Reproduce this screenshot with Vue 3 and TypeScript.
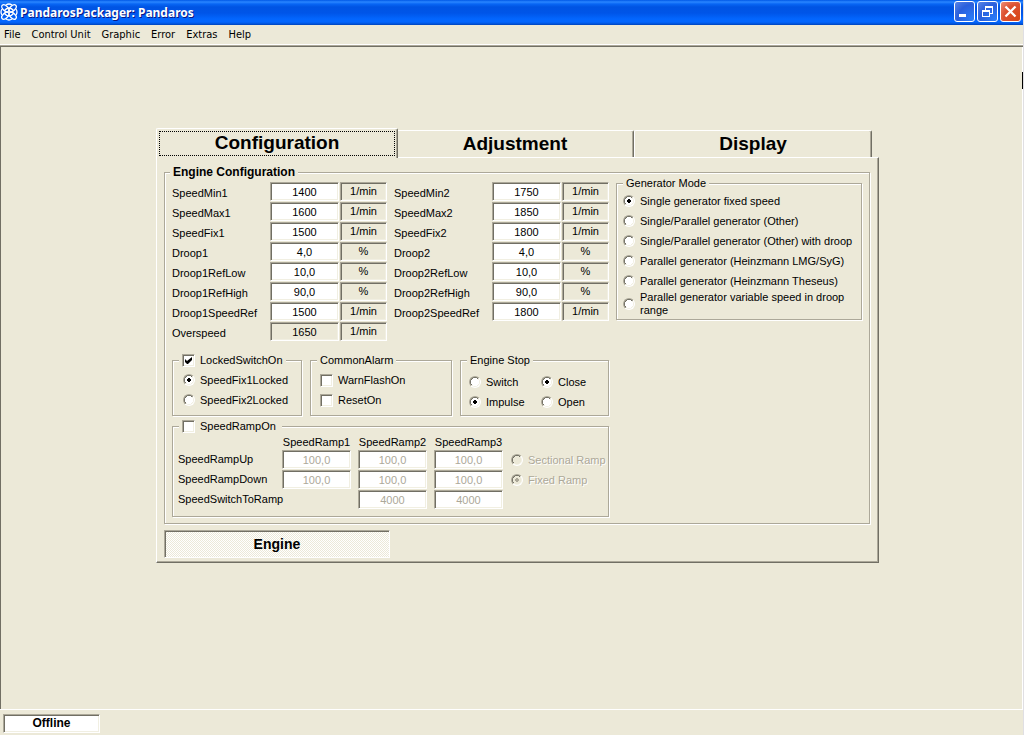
<script setup lang="ts">
import { reactive, ref } from 'vue'

interface Param {
  id: string
  value: string
  unit: string
  readonly?: boolean
}

const menus: string[] = ['File', 'Control Unit', 'Graphic', 'Error', 'Extras', 'Help']
const tabs: string[] = ['Configuration', 'Adjustment', 'Display']
const activeTab = ref('Configuration')

const sets = reactive<Param[][]>([
  [
    { id: 'SpeedMin1', value: '1400', unit: '1/min' },
    { id: 'SpeedMax1', value: '1600', unit: '1/min' },
    { id: 'SpeedFix1', value: '1500', unit: '1/min' },
    { id: 'Droop1', value: '4,0', unit: '%' },
    { id: 'Droop1RefLow', value: '10,0', unit: '%' },
    { id: 'Droop1RefHigh', value: '90,0', unit: '%' },
    { id: 'Droop1SpeedRef', value: '1500', unit: '1/min' },
    { id: 'Overspeed', value: '1650', unit: '1/min', readonly: true },
  ],
  [
    { id: 'SpeedMin2', value: '1750', unit: '1/min' },
    { id: 'SpeedMax2', value: '1850', unit: '1/min' },
    { id: 'SpeedFix2', value: '1800', unit: '1/min' },
    { id: 'Droop2', value: '4,0', unit: '%' },
    { id: 'Droop2RefLow', value: '10,0', unit: '%' },
    { id: 'Droop2RefHigh', value: '90,0', unit: '%' },
    { id: 'Droop2SpeedRef', value: '1800', unit: '1/min' },
  ],
])

const generatorModes: string[] = [
  'Single generator fixed speed',
  'Single/Parallel generator (Other)',
  'Single/Parallel generator (Other) with droop',
  'Parallel generator (Heinzmann LMG/SyG)',
  'Parallel generator (Heinzmann Theseus)',
  'Parallel generator variable speed in droop range',
]
const generatorMode = ref(generatorModes[0])

const lockedOn = ref(true)
const lockedSpeed = ref('SpeedFix1Locked')
const warnFlash = ref(false)
const resetOn = ref(false)
const stopKind = ref('Impulse')
const stopContact = ref('Close')

const rampOn = ref(false)
const rampKind = ref('Fixed Ramp')
const rampRows = reactive([
  { id: 'SpeedRampUp', values: ['100,0', '100,0', '100,0'] },
  { id: 'SpeedRampDown', values: ['100,0', '100,0', '100,0'] },
  { id: 'SpeedSwitchToRamp', values: ['', '4000', '4000'] },
])
</script>

<template>
  <div class="window">
    <header class="titlebar">
      <svg class="logo" viewBox="0 0 18 18" aria-hidden="true">
        <g fill="none" stroke="#fff" stroke-width="1.3">
          <ellipse cx="5.300" cy="5.300" rx="4.300" ry="2.500" transform="rotate(45 5.300 5.300)" />
          <ellipse cx="12.700" cy="5.300" rx="4.300" ry="2.500" transform="rotate(-45 12.700 5.300)" />
          <ellipse cx="5.300" cy="12.700" rx="4.300" ry="2.500" transform="rotate(-45 5.300 12.700)" />
          <ellipse cx="12.700" cy="12.700" rx="4.300" ry="2.500" transform="rotate(45 12.700 12.700)" />
          <path d="M6 2Q9 0 12 2M6 16Q9 18 12 16M2 6Q0 9 2 12M16 6Q18 9 16 12M4 8Q9 2 14 8M4 10Q9 16 14 10" />
        </g>
      </svg>
      <h1>PandarosPackager: Pandaros</h1>
      <div class="caption-buttons">
        <button type="button" aria-label="Minimize">
          <svg viewBox="0 0 19 19"><path d="M4 12h7v3H4z" fill="#fff" /></svg>
        </button>
        <button type="button" aria-label="Restore">
          <svg viewBox="0 0 19 19">
            <path d="M7 4h8v2H7zM14 6h1v6h-1zM7 6h1v2H7zM12 11h2v1h-2zM4 8h8v2H4zM4 10h1v5H4zM11 10h1v5h-1zM4 14h8v1H4z" fill="#fff" />
          </svg>
        </button>
        <button type="button" class="close" aria-label="Close">
          <svg viewBox="0 0 19 19"><path d="M4.500 4.500L14.500 14.500M14.500 4.500L4.500 14.500" stroke="#fff" stroke-width="2.300" /></svg>
        </button>
      </div>
    </header>

    <nav class="menubar">
      <button v-for="m in menus" :key="m" type="button">{{ m }}</button>
    </nav>

    <main class="client">
      <div class="tabs" role="tablist">
        <button
          v-for="t in tabs"
          :key="t"
          type="button"
          role="tab"
          class="tab"
          :class="{ active: t === activeTab }"
          :aria-selected="t === activeTab"
          @click="activeTab = t"
        >
          <span>{{ t }}</span>
        </button>
      </div>

      <section class="panel">
        <fieldset class="group engine-config">
          <legend>Engine Configuration</legend>
          <div class="layout">
            <div class="left">
              <div class="params">
                <div v-for="(set, i) in sets" :key="i" class="param-set">
                  <div v-for="p in set" :key="p.id" class="param">
                    <label :for="p.id">{{ p.id }}</label>
                    <input :id="p.id" v-model="p.value" type="text" class="field" :readonly="p.readonly" />
                    <span class="unit">{{ p.unit }}</span>
                  </div>
                </div>
              </div>

              <div class="boxes">
                <fieldset class="group">
                  <legend>
                    <label class="choice"><input v-model="lockedOn" type="checkbox" />LockedSwitchOn</label>
                  </legend>
                  <div class="choices locked">
                    <label v-for="s in ['SpeedFix1Locked', 'SpeedFix2Locked']" :key="s" class="choice">
                      <input v-model="lockedSpeed" type="radio" name="locked" :value="s" />{{ s }}
                    </label>
                  </div>
                </fieldset>
                <fieldset class="group">
                  <legend>CommonAlarm</legend>
                  <div class="choices alarm">
                    <label class="choice"><input v-model="warnFlash" type="checkbox" />WarnFlashOn</label>
                    <label class="choice"><input v-model="resetOn" type="checkbox" />ResetOn</label>
                  </div>
                </fieldset>
                <fieldset class="group">
                  <legend>Engine Stop</legend>
                  <div class="choices stop">
                    <label class="choice"><input v-model="stopKind" type="radio" name="kind" value="Switch" />Switch</label>
                    <label class="choice"><input v-model="stopContact" type="radio" name="contact" value="Close" />Close</label>
                    <label class="choice"><input v-model="stopKind" type="radio" name="kind" value="Impulse" />Impulse</label>
                    <label class="choice"><input v-model="stopContact" type="radio" name="contact" value="Open" />Open</label>
                  </div>
                </fieldset>
              </div>

              <fieldset class="group">
                <legend class="ramp-legend">
                  <label class="choice"><input v-model="rampOn" type="checkbox" />SpeedRampOn</label>
                </legend>
                <div class="ramp">
                  <div class="ramp-grid">
                    <span></span>
                    <span v-for="n in 3" :key="n" class="ramp-head">SpeedRamp{{ n }}</span>
                    <template v-for="row in rampRows" :key="row.id">
                      <span class="ramp-label">{{ row.id }}</span>
                      <template v-for="(v, c) in row.values" :key="c">
                        <input
                          v-if="v"
                          v-model="row.values[c]"
                          type="text"
                          class="field"
                          :aria-label="row.id + ' SpeedRamp' + (c + 1)"
                          :disabled="!rampOn"
                        />
                        <span v-else></span>
                      </template>
                    </template>
                  </div>
                  <div class="ramp-kind">
                    <label v-for="k in ['Sectional Ramp', 'Fixed Ramp']" :key="k" class="choice" :class="{ off: !rampOn }">
                      <input v-model="rampKind" type="radio" name="ramp" :value="k" :disabled="!rampOn" />{{ k }}
                    </label>
                  </div>
                </div>
              </fieldset>
            </div>

            <fieldset class="group generator">
              <legend>Generator Mode</legend>
              <div class="choices modes">
                <label v-for="g in generatorModes" :key="g" class="choice">
                  <input v-model="generatorMode" type="radio" name="generator" :value="g" /><span>{{ g }}</span>
                </label>
              </div>
            </fieldset>
          </div>
        </fieldset>
        <button type="button" class="engine" aria-pressed="true">Engine</button>
      </section>
    </main>

    <footer class="status"><output>Offline</output></footer>
    <i class="edge-mark" aria-hidden="true"></i>
  </div>
</template>

<style>
body {
  margin: 0;
  background: #ece9d8;
}
</style>

<style scoped>
.window {
  --face: #ece9d8;
  --shade: #aca899;
  --dark: #716f64;
  --light: #f1efe2;
  position: relative;
  box-sizing: border-box;
  display: flex;
  flex-direction: column;
  min-height: 100vh;
  border-right: 1px solid #e0dfe3;
  background: var(--face);
  color: #000;
  font: 11px/13px "Liberation Sans", Arial, sans-serif;
}
.window * {
  box-sizing: border-box;
}
button,
input {
  margin: 0;
  font: inherit;
  color: inherit;
}

.titlebar {
  display: flex;
  align-items: center;
  height: 25px;
  padding: 0 2px 0 0;
  background: linear-gradient(#0058e6 0, #2a86ff 2px, #0866f4 4px, #0054e3 7px, #0055e8 13px, #0366fe 19px, #0366fe 22px, #0052d8 24px, #0042b8 25px);
}
.logo {
  width: 18px;
  height: 18px;
  margin-bottom: 2px;
}
h1 {
  flex: 1;
  margin: 0 0 0 2px;
  font: bold 12px/20px "Noto Sans", "Open Sans", sans-serif;
  color: #fff;
  text-shadow: 1px 1px 0 #0a1883;
}
.caption-buttons {
  display: flex;
  gap: 2px;
  margin-bottom: 2px;
}
.caption-buttons button {
  width: 21px;
  height: 21px;
  padding: 0;
  border: 1px solid #fff;
  border-radius: 3px;
  background: radial-gradient(circle at 90% 90%, #2a7cf8 0, #2a5fdc 60%, #5b86e6 100%);
}
.caption-buttons .close {
  background: radial-gradient(circle at 90% 90%, #d8481a 0, #dc5030 60%, #ee8f78 100%);
}
.caption-buttons svg {
  display: block;
  width: 19px;
  height: 19px;
}

.menubar {
  display: flex;
  gap: 11px;
  height: 19px;
  padding-left: 4px;
}
.menubar button {
  padding: 0;
  border: 0;
  background: none;
  font: 11px/18px "DejaVu Sans Condensed", "Noto Sans", sans-serif;
}

.client {
  flex: 1;
  margin-top: 2px;
  padding: 81px 144px 0 155px;
  border: solid var(--dark);
  border-width: 1px 0 0 1px;
  box-shadow: 0 -1px 0 var(--shade), 0 -2px 0 #fff, inset -1px 0 0 #fff;
}

.tabs {
  display: grid;
  grid-template-columns: repeat(3, 1fr);
  align-items: end;
  height: 29px;
  padding: 0 7px 0 2px;
}
.tab {
  height: 27px;
  padding: 1px 2px;
  border: solid;
  border-width: 1px 1px 0;
  border-color: #fff var(--dark) #fff #fff;
  border-radius: 2px 2px 0 0;
  background: var(--face);
  box-shadow: inset -1px 0 0 var(--shade);
  font: bold 19px/24px "Liberation Sans", Arial, sans-serif;
}
.tab span {
  display: block;
}
.tab.active {
  z-index: 1;
  height: 30px;
  margin: 0 -2px -1px;
  padding: 2px 2px 2px;
}
.tab.active span {
  height: 25px;
  border: 1px dotted #000;
  line-height: 22px;
}

.panel {
  padding: 9px 8px 4px 7px;
  border: 1px solid;
  border-color: #fff var(--dark) var(--dark) #fff;
  box-shadow: inset -1px -1px 0 var(--shade);
}

.group {
  min-width: 0;
  margin: 0;
  padding: 0;
  border: 1px solid var(--shade);
  box-shadow: 1px 1px 0 #fff, inset 1px 1px 0 #fff;
}
legend {
  margin-left: 6px;
  padding: 0 3px;
  background: var(--face);
}
.engine-config > legend {
  margin-left: 5px;
  font-weight: bold;
  font-size: 12px;
  line-height: 10px;
}
.layout {
  display: grid;
  grid-template-columns: 437px 1fr;
  gap: 7px;
  align-items: start;
  padding: 0 7px 6px;
}
.left {
  padding-top: 5px;
}

.params {
  display: grid;
  grid-template-columns: 1fr 1fr;
  gap: 7px;
}
.param {
  display: grid;
  grid-template-columns: 1fr 69px 47px;
  column-gap: 1px;
  height: 20px;
}
.param label {
  line-height: 22px;
}
.field,
.unit {
  height: 19px;
  border: 1px solid;
  border-color: var(--shade) #fff #fff var(--shade);
  box-shadow: inset 1px 1px 0 var(--dark), inset -1px -1px 0 var(--light);
  text-align: center;
}
.field {
  width: 69px;
  padding: 1px 2px;
  border-radius: 0;
  outline: 0;
  background: #fff;
}
.field:read-only {
  background: var(--face);
}
.field:disabled {
  background: #fff;
  color: var(--shade);
}
.unit {
  line-height: 17px;
}

.boxes {
  display: grid;
  grid-template-columns: 130fr 142fr 149fr;
  gap: 8px;
  margin: 12px 0 4px;
}
.choice {
  display: flex;
  align-items: center;
  gap: 5px;
  white-space: nowrap;
}
.choices .choice {
  min-height: 20px;
}
.choices.locked {
  padding: 3px 0 5px 10px;
}
.choices.alarm {
  padding: 3px 0 5px 9px;
}
.choices.stop {
  display: grid;
  grid-template-columns: 72px 1fr;
  padding: 5px 0 3px 8px;
}
.choices.modes {
  padding: 1px 3px 2px 6px;
}
.modes .choice {
  white-space: normal;
}

input[type="radio"],
input[type="checkbox"] {
  flex: none;
  appearance: none;
  border: 1px solid;
  border-color: var(--shade) #fff #fff var(--shade);
}
input[type="radio"] {
  --dot: #fff;
  --well: #fff;
  width: 12px;
  height: 12px;
  border-radius: 50%;
  background: radial-gradient(circle, var(--dot) 0 2px, var(--well) 2px 4px, transparent 4px),
    linear-gradient(135deg, var(--dark) 50%, var(--light) 50%);
}
input[type="radio"]:checked {
  --dot: #000;
}
input[type="radio"]:disabled {
  --dot: var(--face);
  --well: var(--face);
}
input[type="radio"]:disabled:checked {
  --dot: var(--shade);
}
input[type="checkbox"] {
  width: 13px;
  height: 13px;
  padding: 2px;
  background: #fff;
  box-shadow: inset 1px 1px 0 var(--dark), inset -1px -1px 0 var(--light);
}
input[type="checkbox"]:checked::before {
  content: "";
  display: block;
  width: 7px;
  height: 7px;
  background: #000;
  clip-path: polygon(0 2px, 2px 4px, 7px 0, 7px 3px, 3px 7px, 2px 7px, 0 5px);
}

.ramp-legend {
  padding-right: 6px;
}
.ramp {
  display: flex;
  gap: 8px;
  padding: 3px 0 6px 5px;
}
.ramp-grid {
  display: grid;
  grid-template-columns: 97px 69px 69px 69px;
  grid-template-rows: 14px;
  grid-auto-rows: 20px;
  column-gap: 7px;
}
.ramp-grid > :nth-child(4n + 1) {
  margin-right: -7px;
}
.ramp-head {
  text-align: center;
}
.ramp-label {
  line-height: 18px;
}
.ramp-kind {
  padding-top: 14px;
}
.ramp-kind .choice {
  height: 20px;
}
.off {
  color: var(--shade);
  text-shadow: 1px 1px 0 #fff;
}

.engine {
  display: block;
  width: 32%;
  height: 28px;
  margin-top: 6px;
  padding: 0;
  border: 1px solid;
  border-color: var(--shade) #fff #fff var(--shade);
  background: #fff url("data:image/svg+xml,%3Csvg xmlns='http://www.w3.org/2000/svg' width='2' height='2'%3E%3Cpath fill='%23ece9d8' d='M0 0h1v1H0zM1 1h1v1H1z'/%3E%3C/svg%3E");
  box-shadow: inset 1px 1px 0 var(--dark);
  font-weight: bold;
  font-size: 14px;
}

.status {
  height: 26px;
  padding: 4px 3px;
  border-top: 1px solid #fff;
}
.status output {
  display: block;
  width: 97px;
  height: 19px;
  border: 1px solid;
  border-color: var(--shade) #fff #fff var(--shade);
  background: #fff;
  box-shadow: inset 1px 1px 0 var(--dark), inset -1px -1px 0 var(--light);
  font-weight: bold;
  font-size: 12px;
  line-height: 17px;
  text-align: center;
}
.edge-mark {
  position: absolute;
  top: 72px;
  right: 0;
  width: 1px;
  height: 17px;
  background: #000;
}
</style>
